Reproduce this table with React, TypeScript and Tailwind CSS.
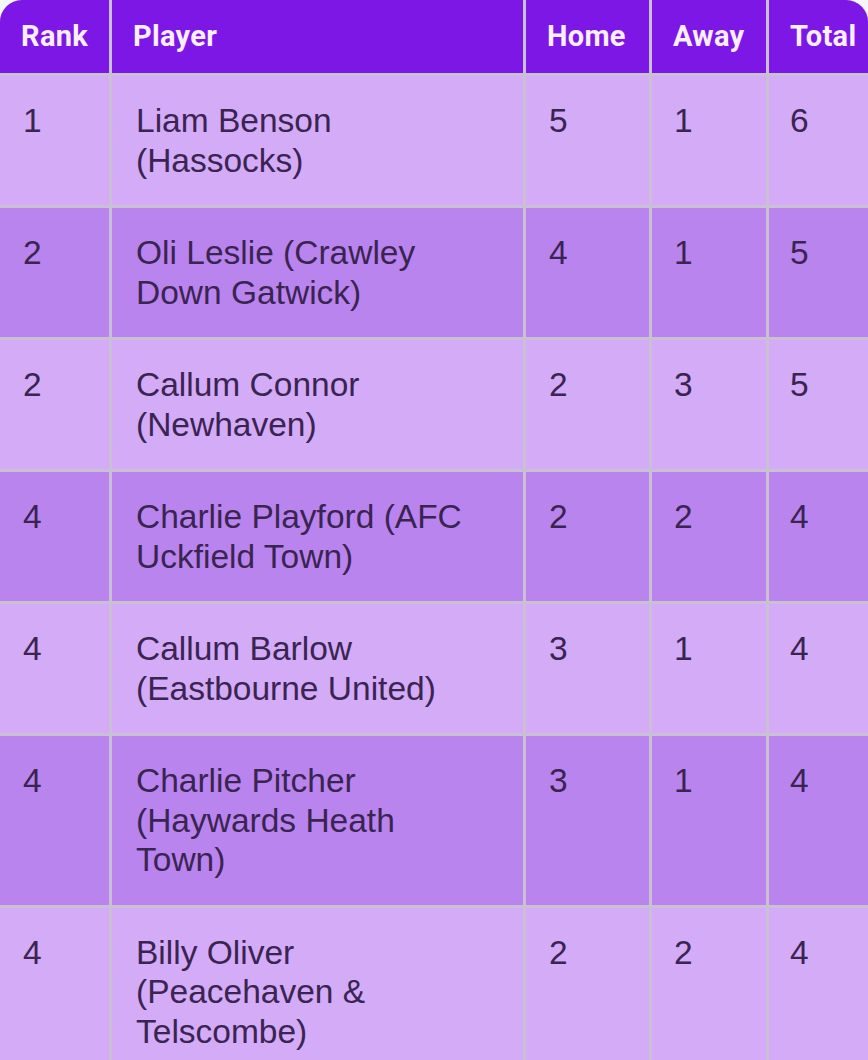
const rows = [
  { rank: '1', player: 'Liam Benson (Hassocks)', home: '5', away: '1', total: '6' },
  { rank: '2', player: 'Oli Leslie (Crawley Down Gatwick)', home: '4', away: '1', total: '5' },
  { rank: '2', player: 'Callum Connor (Newhaven)', home: '2', away: '3', total: '5' },
  { rank: '4', player: 'Charlie Playford (AFC Uckfield Town)', home: '2', away: '2', total: '4' },
  { rank: '4', player: 'Callum Barlow (Eastbourne United)', home: '3', away: '1', total: '4' },
  { rank: '4', player: 'Charlie Pitcher (Haywards Heath Town)', home: '3', away: '1', total: '4' },
  { rank: '4', player: 'Billy Oliver (Peacehaven & Telscombe)', home: '2', away: '2', total: '4' },
]

const headers = ['Rank', 'Player', 'Home', 'Away', 'Total']

export default function App() {
  return (
    <div className="min-h-screen bg-[#f4f6f9]">
      <div className="grid grid-cols-[109px_411px_123px_114px_1fr] gap-[3px] bg-[#c9c0d3] rounded-t-[22px] overflow-hidden">
        {/* Header */}
        {headers.map((h) => (
          <div
            key={h}
            className="h-[73px] flex items-center pl-[21px] pr-2 bg-[#7d17e5] text-[#fbeeff] font-bold text-[29px] tracking-[0.3px] font-['Roboto',sans-serif]"
          >
            {h}
          </div>
        ))}

        {/* Body */}
        {rows.map((r, i) => {
          const bg = i % 2 === 0 ? 'bg-[#d3abf7]' : 'bg-[#b984ee]'
          const cell = `${bg} pt-[25px] pb-[25px] text-[33.5px] leading-[39.5px] text-[#3a2452] font-['Liberation_Sans',Arial,sans-serif]`
          return [
            <div key={`${i}-rank`} className={`${cell} pl-[23px] pr-2`}>{r.rank}</div>,
            <div key={`${i}-player`} className={`${cell} pl-[24px] pr-[36px]`}>{r.player}</div>,
            <div key={`${i}-home`} className={`${cell} pl-[23px] pr-2`}>{r.home}</div>,
            <div key={`${i}-away`} className={`${cell} pl-[22px] pr-2`}>{r.away}</div>,
            <div key={`${i}-total`} className={`${cell} pl-[21px] pr-2`}>{r.total}</div>,
          ]
        })}
      </div>
    </div>
  )
}
